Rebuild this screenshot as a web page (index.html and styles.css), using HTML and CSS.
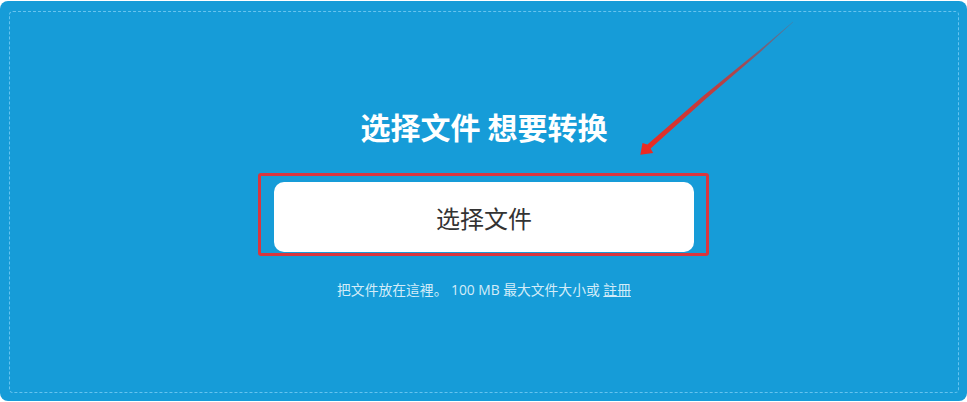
FILE: index.html
```html
<!DOCTYPE html>
<html lang="zh">
<head>
<meta charset="utf-8">
<title>选择文件</title>
<link rel="stylesheet" href="styles.css">
</head>
<body>
<div class="panel">
  <div class="drop">
    <h1 class="title">选择文件 想要转换</h1>
    <div class="btn-wrap">
      <button class="choose">选择文件</button>
      <span class="highlight"></span>
    </div>
    <p class="hint">把文件放在這裡。 100 MB 最大文件大小或 <a href="#" class="signup">註冊</a></p>
  </div>
  <svg class="arrow" width="967" height="402" viewBox="0 0 967 402" aria-hidden="true">
    <defs>
      <linearGradient id="ag" x1="793" y1="22" x2="641" y2="155" gradientUnits="userSpaceOnUse">
        <stop offset="0" stop-color="#b03a3a" stop-opacity="0.3"/>
        <stop offset="0.35" stop-color="#d0322c" stop-opacity="0.8"/>
        <stop offset="1" stop-color="#f0291f"/>
      </linearGradient>
    </defs>
    <polygon points="793.2,22 760.7,51.8 706.3,98.5 650.6,148.4 653.2,152.9 640.3,154.7 642.5,143.1 647.4,144.6 703.7,95.5 759.3,50.3 792.8,21.8" fill="url(#ag)"/>
  </svg>
</div>
</body>
</html>
```
FILE: styles.css
```css
* { box-sizing: border-box; }
html, body { margin: 0; padding: 0; background: #ffffff; }
body { font-family: "Open Sans", "Noto Sans CJK SC", sans-serif; }

.panel {
  position: relative;
  margin-top: 1px;
  width: 967px;
  height: 400px;
  background: #169cd8;
  border-radius: 8px;
  padding: 10px 8px 8px 9px;
}

.drop {
  height: 382px;
  border: 1px dashed #66c3ef;
  border-radius: 4px;
  display: flex;
  flex-direction: column;
  align-items: center;
  padding-top: 96px;
}

.title {
  margin: 0;
  font-family: "Noto Sans CJK SC", sans-serif;
  font-size: 30px;
  line-height: 36px;
  font-weight: 700;
  color: #ffffff;
}

.btn-wrap {
  position: relative;
  margin-top: 38px;
}

.choose {
  display: block;
  width: 420px;
  height: 70px;
  border: none;
  border-radius: 10px;
  background: #ffffff;
  color: #333333;
  font-family: "Noto Sans CJK SC", sans-serif;
  font-size: 24px;
  padding: 0;
}

.highlight {
  position: absolute;
  left: -16px;
  top: -9px;
  width: 451px;
  height: 83px;
  border: 3px solid #d9363e;
  border-radius: 3px;
}

.hint {
  margin: 28px 0 0;
  font-size: 13.8px;
  line-height: 20px;
  color: #d3ecf8;
}

.signup {
  color: #d3ecf8;
  text-decoration: underline;
}

.arrow {
  position: absolute;
  left: 0;
  top: -1px;
  pointer-events: none;
}
```
